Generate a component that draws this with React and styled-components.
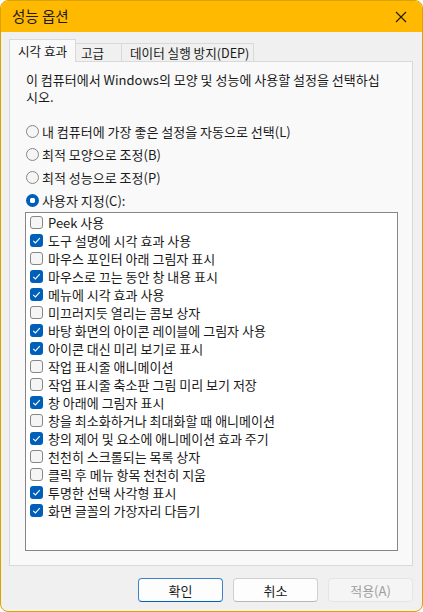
import styled, { createGlobalStyle } from "styled-components";

const items = [
  ["Peek 사용", false],
  ["도구 설명에 시각 효과 사용", true],
  ["마우스 포인터 아래 그림자 표시", false],
  ["마우스로 끄는 동안 창 내용 표시", true],
  ["메뉴에 시각 효과 사용", true],
  ["미끄러지듯 열리는 콤보 상자", false],
  ["바탕 화면의 아이콘 레이블에 그림자 사용", true],
  ["아이콘 대신 미리 보기로 표시", true],
  ["작업 표시줄 애니메이션", false],
  ["작업 표시줄 축소판 그림 미리 보기 저장", false],
  ["창 아래에 그림자 표시", true],
  ["창을 최소화하거나 최대화할 때 애니메이션", false],
  ["창의 제어 및 요소에 애니메이션 효과 주기", true],
  ["천천히 스크롤되는 목록 상자", false],
  ["클릭 후 메뉴 항목 천천히 지움", false],
  ["투명한 선택 사각형 표시", true],
  ["화면 글꼴의 가장자리 다듬기", true],
];

const radios = [
  ["내 컴퓨터에 가장 좋은 설정을 자동으로 선택(L)", false],
  ["최적 모양으로 조정(B)", false],
  ["최적 성능으로 조정(P)", false],
  ["사용자 지정(C):", true],
];

export default function App() {
  return (
    <>
      <GlobalStyle />
      <Window>
        <TitleBar>
          <Title>성능 옵션</Title>
          <CloseButton>
            <svg width="12" height="12" viewBox="0 0 12 12">
              <path d="M1 1L11 11M11 1L1 11" stroke="#1b1b1b" strokeWidth="1.1" fill="none" />
            </svg>
          </CloseButton>
        </TitleBar>

        <Body>
          <Tabs>
            <Tab $active $width={67} $pad={8}>시각 효과</Tab>
            <Tab $width={46} $pad={5}>고급</Tab>
            <Tab $width={132} $pad={8}>데이터 실행 방지(DEP)</Tab>
          </Tabs>

          <Panel>
            <Description>
              <DescLine>이 컴퓨터에서 Windows의 모양 및 성능에 사용할 설정을 선택하십</DescLine>
              <DescLine>시오.</DescLine>
            </Description>

            <RadioGroup>
              {radios.map(([label, checked]) => (
                <RadioRow key={label}>
                  <RadioCircle $checked={checked} />
                  <span>{label}</span>
                </RadioRow>
              ))}
            </RadioGroup>

            <ListBox>
              {items.map(([label, checked]) => (
                <CheckRow key={label}>
                  <CheckBox $checked={checked}>
                    {checked && (
                      <svg width="9" height="9" viewBox="0 0 9 9">
                        <path
                          d="M1.2 4.8L3.4 6.9L7.8 2.2"
                          stroke="#fff"
                          strokeWidth="1.1"
                          fill="none"
                        />
                      </svg>
                    )}
                  </CheckBox>
                  <span>{label}</span>
                </CheckRow>
              ))}
            </ListBox>
          </Panel>

          <Footer>
            <Button $variant="primary">확인</Button>
            <Button>취소</Button>
            <Button $variant="disabled">적용(A)</Button>
          </Footer>
        </Body>
      </Window>
    </>
  );
}

const GlobalStyle = createGlobalStyle`
  body {
    margin: 0;
    background: #ffffff;
    font-family: "Noto Sans CJK KR", "Noto Sans", sans-serif;
    color: #1a1a1a;
  }
`;

const Window = styled.div`
  box-sizing: border-box;
  width: 423px;
  height: 612px;
  border: 1px solid #d9a300;
  border-radius: 8px;
  overflow: hidden;
  background: #f0f0f0;
  display: flex;
  flex-direction: column;
`;

const TitleBar = styled.div`
  height: 31px;
  flex: none;
  background: #ffb900;
  display: flex;
  align-items: center;
  justify-content: space-between;
  padding: 0 0 0 11px;
`;

const Title = styled.div`
  font-size: 14.5px;
  line-height: 1;
  color: #1a1a1a;
`;

const CloseButton = styled.div`
  width: 36px;
  height: 31px;
  display: flex;
  align-items: center;
  justify-content: center;
  margin-right: 3px;
`;

const Body = styled.div`
  flex: 1;
  display: flex;
  flex-direction: column;
  padding: 8px 9px 8px 8px;
`;

const Tabs = styled.div`
  display: flex;
  align-items: flex-end;
  height: 22px;
  margin-bottom: -1px;
  position: relative;
  z-index: 1;
`;

const Tab = styled.div`
  box-sizing: border-box;
  width: ${(p) => p.$width}px;
  height: ${(p) => (p.$active ? 23 : 19)}px;
  padding: ${(p) => (p.$active ? "2px" : "0")} 0 0 ${(p) => p.$pad}px;
  border: 1px solid #d9d9d9;
  border-bottom: ${(p) => (p.$active ? "none" : "1px solid #d9d9d9")};
  border-left: ${(p) => (p.$active ? "1px solid #d9d9d9" : "none")};
  background: ${(p) => (p.$active ? "#f9f9f9" : "#f0f0f0")};
  font-size: 12.6px;
  line-height: 17px;
  white-space: nowrap;
`;

const Panel = styled.div`
  box-sizing: border-box;
  height: 505px;
  flex: none;
  background: #f9f9f9;
  border: 1px solid #d9d9d9;
  padding: 9px 13px 0 15px;
  display: flex;
  flex-direction: column;
`;

const Description = styled.div`
  display: flex;
  flex-direction: column;
  padding-left: 1px;
`;

const DescLine = styled.div`
  font-size: 13px;
  line-height: 17px;
  white-space: nowrap;
`;

const RadioGroup = styled.div`
  margin-top: 15px;
  display: flex;
  flex-direction: column;
`;

const RadioRow = styled.div`
  height: 23px;
  display: flex;
  align-items: center;
  gap: 3px;
  font-size: 13px;
  padding-left: 1px;
`;

const RadioCircle = styled.div`
  box-sizing: border-box;
  width: 13px;
  height: 13px;
  border-radius: 50%;
  flex: none;
  border: ${(p) => (p.$checked ? "none" : "1px solid #868686")};
  background: ${(p) =>
    p.$checked
      ? "radial-gradient(circle, #ffffff 0 2.6px, #005fb8 3px)"
      : "#f5f5f5"};
`;

const ListBox = styled.div`
  box-sizing: border-box;
  height: 339px;
  margin-right: 1px;
  background: #ffffff;
  border: 1px solid #868686;
  display: flex;
  flex-direction: column;
`;

const CheckRow = styled.div`
  height: 18.06px;
  display: flex;
  align-items: center;
  gap: 5px;
  padding-left: 4px;
  font-size: 13px;
  white-space: nowrap;
`;

const CheckBox = styled.div`
  box-sizing: border-box;
  width: 13px;
  height: 13px;
  border-radius: 3px;
  flex: none;
  display: flex;
  align-items: center;
  justify-content: center;
  border: ${(p) => (p.$checked ? "none" : "1px solid #868686")};
  background: ${(p) => (p.$checked ? "#005fb8" : "#f5f5f5")};
`;

const Footer = styled.div`
  margin-top: 12px;
  display: flex;
  justify-content: flex-end;
  gap: 10px;
`;

const Button = styled.div`
  box-sizing: border-box;
  width: 85px;
  height: 24px;
  border-radius: 4px;
  display: flex;
  align-items: center;
  justify-content: center;
  font-size: 13px;
  color: ${(p) => (p.$variant === "disabled" ? "#9d9d9d" : "#1a1a1a")};
  background: ${(p) => (p.$variant === "disabled" ? "#f5f5f5" : "#fdfdfd")};
  border: 1px solid
    ${(p) =>
      p.$variant === "primary"
        ? "#3c83c8"
        : p.$variant === "disabled"
        ? "#e5e5e5"
        : "#d0d0d0"};
  border-bottom-color: ${(p) =>
    p.$variant === "primary" ? "#005fb8" : p.$variant === "disabled" ? "#e5e5e5" : "#b8b8b8"};
`;
